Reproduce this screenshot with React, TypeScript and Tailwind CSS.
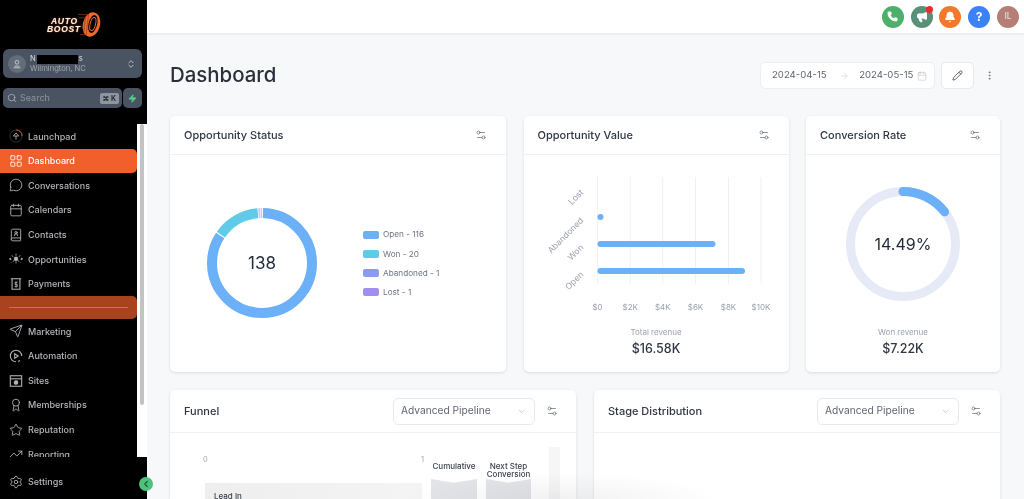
import {
  ArrowRight,
  Award,
  Bell,
  BookUser,
  ChevronDown,
  ChevronLeft,
  ChevronsUpDown,
  Calendar,
  EllipsisVertical,
  LayoutGrid,
  MessageCircle,
  Megaphone,
  Pencil,
  Phone,
  Search,
  Send,
  Settings,
  Settings2,
  Star,
  TrendingUp,
  Zap,
} from "lucide-react";
import type { ReactNode } from "react";

function LaunchpadIcon() {
  return (
    <svg viewBox="0 0 16 16" className="h-[14px] w-[14px]" fill="none" stroke="currentColor" strokeWidth="1">
      <circle cx="8" cy="8" r="7" stroke="#3a3a3a" />
      <path d="M8 1a7 7 0 0 1 7 7" stroke="#e2622c" />
      <path d="M8 12V8M5 8l3-3.5L11 8z" />
    </svg>
  );
}

function OpportunitiesIcon() {
  return (
    <svg viewBox="0 0 16 16" className="h-[14px] w-[14px]" fill="currentColor" stroke="currentColor" strokeWidth="1">
      <circle cx="8" cy="8" r="2" />
      <path d="M8 2v12M3 4l10 8M13 4 3 12" strokeDasharray="2 1" fill="none" />
      <circle cx="1.5" cy="8" r="0.8" />
      <circle cx="14.5" cy="8" r="0.8" />
    </svg>
  );
}

function PaymentsIcon() {
  return (
    <svg viewBox="0 0 16 16" className="h-[14px] w-[14px]" fill="none" stroke="currentColor" strokeWidth="1.2">
      <path d="M2 2h12M3.5 2v12h9V2" />
      <path d="M10 6H7v2.5h2.5V11H6.5M8 5v7" strokeWidth="0.9" />
    </svg>
  );
}

function AutomationIcon() {
  return (
    <svg viewBox="0 0 16 16" className="h-[14px] w-[14px]" fill="none" stroke="currentColor" strokeWidth="1.2">
      <path d="M14.5 8A6.5 6.5 0 1 0 8 14.5" />
      <path d="M6.5 5.5 10.5 8l-4 2.5z" />
      <path d="M10.5 14.2l2-1" />
    </svg>
  );
}

function SitesIcon() {
  return (
    <svg viewBox="0 0 16 16" className="h-[14px] w-[14px]" fill="none" stroke="currentColor" strokeWidth="1.2">
      <rect x="1.5" y="2" width="13" height="12" />
      <path d="M1.5 5.5h13" />
      <circle cx="8" cy="9.8" r="2" fill="currentColor" />
    </svg>
  );
}

type NavEntry = { label: string; icon: ReactNode; active?: boolean };

const navTop: NavEntry[] = [
  { label: "Launchpad", icon: <LaunchpadIcon /> },
  { label: "Dashboard", icon: <LayoutGrid size={14} strokeWidth={1.5} />, active: true },
  { label: "Conversations", icon: <MessageCircle size={14} strokeWidth={1.5} /> },
  { label: "Calendars", icon: <Calendar size={14} strokeWidth={1.5} /> },
  { label: "Contacts", icon: <BookUser size={14} strokeWidth={1.5} /> },
  { label: "Opportunities", icon: <OpportunitiesIcon /> },
  { label: "Payments", icon: <PaymentsIcon /> },
];

const navBottom: NavEntry[] = [
  { label: "Marketing", icon: <Send size={14} strokeWidth={1.5} /> },
  { label: "Automation", icon: <AutomationIcon /> },
  { label: "Sites", icon: <SitesIcon /> },
  { label: "Memberships", icon: <Award size={14} strokeWidth={1.5} /> },
  { label: "Reputation", icon: <Star size={14} strokeWidth={1.5} /> },
  { label: "Reporting", icon: <TrendingUp size={14} strokeWidth={1.5} /> },
];

function NavItem({ label, icon, active }: NavEntry) {
  return (
    <div
      className={
        "flex h-[24.6px] shrink-0 items-center gap-[5.5px] rounded-r-[5px] pl-[8.5px] text-[9px] font-medium " +
        (active ? "bg-[#f15f2a] text-white" : "text-[#b4b6ba]")
      }
    >
      <span className="flex w-[14px] justify-center">{icon}</span>
      <span>{label}</span>
    </div>
  );
}

function Logo() {
  return (
    <div className="flex h-[29px] shrink-0 items-center pl-[47px]">
      <div className="mt-[2px] flex flex-col items-end text-[8.5px] leading-[7.5px] font-bold tracking-[0.7px] text-[#fdf1e6] italic [font-family:'Liberation_Sans',sans-serif] [text-shadow:0_0_1.5px_#e2622c]">
        <span className="mr-[3px]">AUTO</span>
        <span>BOOST</span>
      </div>
      <svg viewBox="0 0 24 28" className="ml-[-3px] h-[27px] w-[23px]" fill="none">
        <path d="M0 3.5h10M1 7h6M2 24.5h8" stroke="#e2622c" strokeWidth="1" opacity="0.45" />
        <ellipse cx="14" cy="14" rx="7.5" ry="11.5" transform="rotate(14 14 14)" fill="#ec6a2b" stroke="#ec6a2b" strokeWidth="3" />
        <ellipse cx="15.5" cy="13.5" rx="4.5" ry="9.5" transform="rotate(14 15.5 13.5)" fill="#000" />
        <ellipse cx="15.5" cy="13.5" rx="2.8" ry="7" transform="rotate(14 15.5 13.5)" fill="#000" stroke="#ec6a2b" strokeWidth="1" />
        <path d="M8 5 6 22M11 3 8.5 25" stroke="#8f3c16" strokeWidth="0.7" />
      </svg>
    </div>
  );
}

function Sidebar() {
  return (
    <aside className="relative flex h-full w-[147px] shrink-0 flex-col bg-black pt-[10px] text-[#b4b6ba]">
      <Logo />
      <div className="mt-[10px] mr-[5px] ml-[3px] flex h-[29px] shrink-0 items-center rounded-[6px] bg-[#4a5362] pr-[6px] pl-[5px]">
        <span className="flex h-[18px] w-[18px] items-center justify-center rounded-full bg-[#646c79]">
          <svg viewBox="0 0 12 12" className="h-[10px] w-[10px]" fill="none" stroke="#d5d7db" strokeWidth="1">
            <circle cx="6" cy="4" r="2.2" />
            <path d="M2 10.5h8M3 8.5h6" />
          </svg>
        </span>
        <div className="ml-[4px] flex-1 leading-none">
          <div className="flex h-[10px] items-center text-[7.6px] text-[#d8dadd]">
            <span>N</span>
            <span className="mx-[1px] h-[9px] w-[41px] bg-black" />
            <span>s</span>
          </div>
          <div className="mt-[1px] text-[7.6px] text-[#a2a7af]">Wilmington, NC</div>
        </div>
        <ChevronsUpDown size={10} className="text-[#cfd2d6]" />
      </div>
      <div className="mt-[10px] mr-[5px] ml-[3px] flex h-[20px] shrink-0 gap-[1px]">
        <div className="flex w-[119px] items-center rounded-[5px] bg-[#4a5362] pr-[3px] pl-[4px]">
          <Search size={10} className="text-[#a9adb4]" />
          <span className="ml-[3px] flex-1 text-[9px] text-[#8e939c]">Search</span>
          <span className="rounded-[2px] bg-[#8f95a0] px-[3px] text-[7px] leading-[11px] font-bold text-[#262a31]">⌘ K</span>
        </div>
        <div className="flex w-[19px] items-center justify-center rounded-[5px] bg-[#4a5362]">
          <Zap size={9} className="fill-[#4fd08a] text-[#4fd08a]" />
        </div>
      </div>
      <div className="mt-[16px] flex h-[333px] w-full shrink-0 overflow-hidden">
        <nav className="flex w-[137px] flex-col">
          {navTop.map((n) => (
            <NavItem key={n.label} {...n} />
          ))}
          <div className="flex h-[23px] shrink-0 items-center rounded-r-[5px] bg-[#a8431d] px-[9px]">
            <span className="h-[1px] w-full bg-[#b57a62]" />
          </div>
          {navBottom.map((n) => (
            <NavItem key={n.label} {...n} />
          ))}
        </nav>
        <div className="w-[10px] bg-white px-[3px]">
          <div className="h-[281px] rounded-[3px] bg-[#c3c3c3]" />
        </div>
      </div>
      <div className="mt-[18px] flex items-center gap-[5.5px] pl-[8.5px] text-[9px] font-medium">
        <Settings size={14} strokeWidth={1.5} />
        <span>Settings</span>
      </div>
      <span className="absolute top-[477px] left-[139px] flex h-[14px] w-[14px] items-center justify-center rounded-full bg-[#4cc27c]">
        <ChevronLeft size={10} strokeWidth={3} className="text-[#1f5d3c]" />
      </span>
    </aside>
  );
}

function TopBar() {
  return (
    <header className="flex h-[35px] shrink-0 items-center justify-end gap-[6.8px] border-b-2 border-[#eceef0] bg-white pr-[5px]">
      <span className="flex h-[22px] w-[22px] items-center justify-center rounded-full bg-[#4caf6a] text-white">
        <Phone size={11} className="fill-white" />
      </span>
      <span className="relative flex h-[22px] w-[22px] items-center justify-center rounded-full bg-[#5a8f78] text-white">
        <Megaphone size={12} className="fill-white" />
        <span className="absolute top-0 right-0 h-[7px] w-[7px] rounded-full bg-[#ee2b2b]" />
      </span>
      <span className="flex h-[22px] w-[22px] items-center justify-center rounded-full bg-[#f4782a] text-white">
        <Bell size={12} className="fill-white" />
      </span>
      <span className="flex h-[22px] w-[22px] items-center justify-center rounded-full bg-[#3b82f6] text-[12px] font-bold text-white">
        ?
      </span>
      <span className="flex h-[22px] w-[22px] items-center justify-center rounded-full bg-[#b57f78] text-[8.5px] font-medium text-[#e9d9d6]">
        IL
      </span>
    </header>
  );
}

function FilterIcon() {
  return <Settings2 size={12} strokeWidth={1.5} className="text-[#6b7280]" />;
}

function CardHeader({ title }: { title: string }) {
  return (
    <div className="flex h-[38.5px] items-center justify-between border-b border-[#eef0f3] pr-[19px] pl-[14px]">
      <span className="text-[11px] font-medium text-[#2f3542]">{title}</span>
      <FilterIcon />
    </div>
  );
}

function Card({ children, className = "" }: { children: ReactNode; className?: string }) {
  return (
    <section className={"overflow-hidden rounded-[5px] bg-white shadow-[0_1px_3px_rgba(16,24,40,0.12)] " + className}>
      {children}
    </section>
  );
}

function StatusDonut() {
  const c = 2 * Math.PI * 50;
  const arc = (frac: number, start: number, color: string) => (
    <circle
      cx="60"
      cy="60"
      r="50"
      fill="none"
      stroke={color}
      strokeWidth="10"
      strokeDasharray={`${frac * c} ${c}`}
      strokeDashoffset={-start * c}
      transform="rotate(-90 60 60)"
    />
  );
  return (
    <svg viewBox="0 0 120 120" className="h-[120px] w-[120px]">
      {arc(0.838, 0.003, "#6cb0f7")}
      {arc(0.14, 0.845, "#5fcbe9")}
      {arc(0.006, 0.987, "#c9c9f7")}
      {arc(0.006, 0.995, "#cfc2f7")}
      <text x="60" y="65.5" textAnchor="middle" fontSize="17" fill="#1f2937" fontFamily="Inter, sans-serif">
        138
      </text>
    </svg>
  );
}

const legend = [
  { label: "Open - 116", color: "bg-[#6cb0f7]" },
  { label: "Won - 20", color: "bg-[#5fcbe9]" },
  { label: "Abandoned - 1", color: "bg-[#8c9bf2]" },
  { label: "Lost - 1", color: "bg-[#a28ef0]" },
];

function OpportunityStatus() {
  return (
    <Card>
      <CardHeader title="Opportunity Status" />
      <div className="flex h-[217px] items-center pb-[1px] pl-[32px]">
        <StatusDonut />
        <ul className="mt-[2px] ml-[41px] flex flex-col gap-[5.3px]">
          {legend.map((l) => (
            <li key={l.label} className="flex h-[14px] items-center gap-[4px] text-[8.2px] text-[#6b7280]">
              <span className={"h-[8px] w-[16px] rounded-[2px] " + l.color} />
              {l.label}
            </li>
          ))}
        </ul>
      </div>
    </Card>
  );
}

function ValueChart() {
  const xs = [73.5, 106.2, 138.8, 171.5, 204.5, 237];
  const ticks = ["$0", "$2K", "$4K", "$6K", "$8K", "$10K"];
  const rows = [
    { label: "Lost", lx: 60, ly: 38 },
    { label: "Abandoned", lx: 60, ly: 66 },
    { label: "Won", lx: 60, ly: 93 },
    { label: "Open", lx: 60, ly: 120 },
  ];
  return (
    <svg viewBox="0 0 265 160" className="h-[160px] w-[265px]" fontFamily="Inter, sans-serif">
      {xs.map((x) => (
        <line key={x} x1={x} x2={x} y1="22" y2="129" stroke="#eef0f6" />
      ))}
      <rect x="73.5" y="59" width="6" height="6" rx="3" fill="#6cb0f7" />
      <rect x="73.5" y="86" width="118" height="6" rx="3" fill="#6cb0f7" />
      <rect x="73.5" y="113" width="147.5" height="6" rx="3" fill="#6cb0f7" />
      {rows.map((r) => (
        <text
          key={r.label}
          x={r.lx}
          y={r.ly}
          fontSize="8.5"
          fill="#9aa1ad"
          textAnchor="end"
          transform={`rotate(-45 ${r.lx} ${r.ly})`}
        >
          {r.label}
        </text>
      ))}
      {xs.map((x, i) => (
        <text key={ticks[i]} x={x} y="154.5" fontSize="8" fill="#9aa1ad" textAnchor="middle">
          {ticks[i]}
        </text>
      ))}
    </svg>
  );
}

function Revenue({ label, value }: { label: string; value: string }) {
  return (
    <div className="flex flex-col items-center">
      <span className="text-[8px] leading-[12px] text-[#9aa1ad]">{label}</span>
      <span className="mt-[2px] text-[12.5px] leading-[17px] font-medium text-[#2f3542]">{value}</span>
    </div>
  );
}

function OpportunityValue() {
  return (
    <Card>
      <CardHeader title="Opportunity Value" />
      <div className="flex flex-col items-center">
        <ValueChart />
        <div className="mt-[11px]">
          <Revenue label="Total revenue" value="$16.58K" />
        </div>
      </div>
    </Card>
  );
}

function ConversionRate() {
  const c = 2 * Math.PI * 52.5;
  return (
    <Card>
      <CardHeader title="Conversion Rate" />
      <div className="flex flex-col items-center">
        <svg viewBox="0 0 120 120" className="mt-[29px] h-[120px] w-[120px]">
          <circle cx="60" cy="60" r="52.5" fill="none" stroke="#e6eaf7" strokeWidth="9" />
          <circle
            cx="60"
            cy="60"
            r="52.5"
            fill="none"
            stroke="#6cb0f7"
            strokeWidth="9"
            strokeLinecap="round"
            strokeDasharray={`${0.1449 * c} ${c}`}
            transform="rotate(-90 60 60)"
          />
          <text x="60" y="66" textAnchor="middle" fontSize="16" fill="#1f2937" fontFamily="Inter, sans-serif">
            14.49%
          </text>
        </svg>
        <div className="mt-[22px]">
          <Revenue label="Won revenue" value="$7.22K" />
        </div>
      </div>
    </Card>
  );
}

function PipelineHeader({ title }: { title: string }) {
  return (
    <div className="flex h-[43px] items-center border-b border-[#eef0f3] pr-[18.5px] pl-[14px]">
      <span className="flex-1 text-[11px] font-medium text-[#2f3542]">{title}</span>
      <div className="flex h-[27px] w-[142px] items-center justify-between rounded-[5px] border border-[#e7e9ed] pr-[8px] pl-[7px] text-[10.2px] text-[#5f6672]">
        Advanced Pipeline
        <ChevronDown size={9} className="text-[#b6bac2]" />
      </div>
      <span className="ml-[10.5px]">
        <FilterIcon />
      </span>
    </div>
  );
}

function FunnelBody() {
  const notch = "h-[30px] w-full bg-[#e3e4e8] [clip-path:polygon(0_0,50%_16%,100%_0,100%_100%,0_100%)]";
  return (
    <div className="flex h-[70px] pl-[35px]">
      <div className="mt-[21px] w-[217px]">
        <div className="mx-[-2px] flex h-[12px] justify-between text-[7.5px] leading-[12px] text-[#a3a8b2]">
          <span>0</span>
          <span>1</span>
        </div>
        <div className="mt-[17px] h-[30px] bg-gradient-to-r from-[#eeeeef] to-[#f4f4f5] pt-[7px] pl-[9px] text-[8px] font-medium text-[#3a404c]">
          Lead In
        </div>
      </div>
      <div className="ml-[9px] flex w-[46px] flex-col items-center">
        <div className="mt-[29px] h-[21px] text-[8px] leading-[8px] font-medium whitespace-nowrap text-[#3a404c]">Cumulative</div>
        <div className={notch} />
      </div>
      <div className="ml-[9px] flex w-[45px] flex-col items-center">
        <div className="mt-[29px] h-[21px] text-center text-[8px] leading-[8px] font-medium whitespace-nowrap text-[#3a404c]">
          Next Step
          <br />
          Conversion
        </div>
        <div className={notch} />
      </div>
      <div className="mt-[14px] ml-[18px] h-full w-[11px] bg-[#f6f6f7]" />
    </div>
  );
}

export default function App() {
  return (
    <div className="relative flex h-[499px] w-[1024px] overflow-hidden bg-[#f7f8fa] blur-[0.35px] [font-family:Inter,sans-serif]">
      <Sidebar />
      <main className="flex min-w-0 flex-1 flex-col">
        <TopBar />
        <div className="pr-[24px] pl-[23px]">
          <div className="flex h-[81px] items-center justify-between">
            <h1 className="text-[20.4px] font-medium text-[#2b303b]">Dashboard</h1>
            <div className="flex items-center">
              <div className="flex h-[27px] w-[175px] items-center rounded-[5px] border border-[#eceef1] bg-white pl-[11px] text-[9.6px] whitespace-nowrap text-[#5f6672]">
                2024-04-15
                <ArrowRight size={10} strokeWidth={1} className="mr-[10.5px] ml-[12px] text-[#b6bac2]" />
                2024-05-15
                <Calendar size={10} strokeWidth={1} className="ml-[4px] text-[#a3a8b2]" />
              </div>
              <div className="ml-[6px] flex h-[27px] w-[33px] items-center justify-center rounded-[5px] border border-[#e7e9ed] bg-white">
                <Pencil size={11} className="text-[#4b5563]" />
              </div>
              <EllipsisVertical size={11} className="mr-[5px] ml-[10px] text-[#6b7280]" />
            </div>
          </div>
          <div className="grid h-[256px] grid-cols-[336px_265px_194px] gap-[17.5px]">
            <OpportunityStatus />
            <OpportunityValue />
            <ConversionRate />
          </div>
          <div className="mt-[18px] grid grid-cols-2 gap-[18px]">
            <Card>
              <PipelineHeader title="Funnel" />
              <FunnelBody />
            </Card>
            <Card>
              <PipelineHeader title="Stage Distribution" />
              <div className="h-[70px]" />
            </Card>
          </div>
        </div>
      </main>
      <div className="pointer-events-none absolute bottom-0 left-[400px] h-[26px] w-[320px] bg-[radial-gradient(50%_100%_at_50%_100%,rgba(60,60,70,0.07),transparent)]" />
    </div>
  );
}
